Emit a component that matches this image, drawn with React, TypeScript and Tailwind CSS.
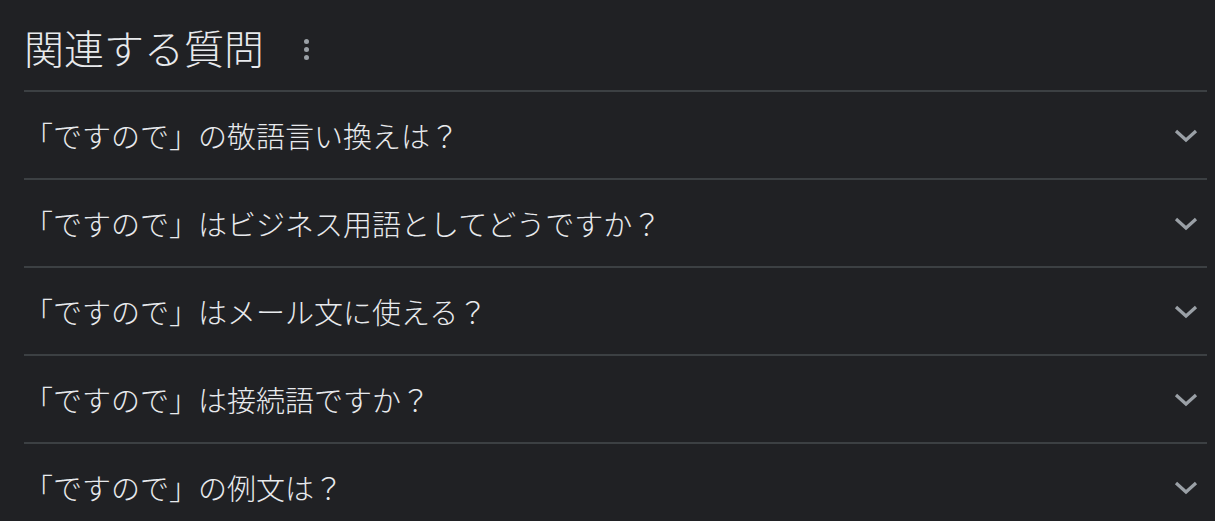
import React from "react";

const questions = [
  "「ですので」の敬語言い換えは？",
  "「ですので」はビジネス用語としてどうですか？",
  "「ですので」はメール文に使える？",
  "「ですので」は接続語ですか？",
  "「ですので」の例文は？",
];

function Chevron() {
  return (
    <svg width="24" height="24" viewBox="0 0 24 24" className="shrink-0">
      <path d="M2 7 L12 16 L22 7" fill="none" stroke="#9aa0a6" strokeWidth="3.2" />
    </svg>
  );
}

export default function App() {
  return (
    <div
      className="w-[1215px] h-[521px] bg-[#202124] overflow-hidden pl-[24px] pr-[8px]"
      style={{ fontFamily: '"Noto Sans CJK JP", "Noto Sans", sans-serif' }}
    >
      <div className="h-[90px] flex items-center pt-[4px]">
        <span className="text-[40px] font-light text-[#e8eaed] leading-none">関連する質問</span>
        <div className="ml-[40px] flex flex-col gap-[3px] mt-[4px]">
          <span className="block w-[5px] h-[5px] rounded-full bg-[#9aa0a6]" />
          <span className="block w-[5px] h-[5px] rounded-full bg-[#9aa0a6]" />
          <span className="block w-[5px] h-[5px] rounded-full bg-[#9aa0a6]" />
        </div>
      </div>
      {questions.map((q) => (
        <div
          key={q}
          className="h-[88px] border-t-2 border-[#3c4043] flex items-center justify-between"
        >
          <span className="text-[29px] font-light text-[#e8eaed] leading-none">{q}</span>
          <div className="mr-[9px] mt-[2px]">
            <Chevron />
          </div>
        </div>
      ))}
    </div>
  );
}
